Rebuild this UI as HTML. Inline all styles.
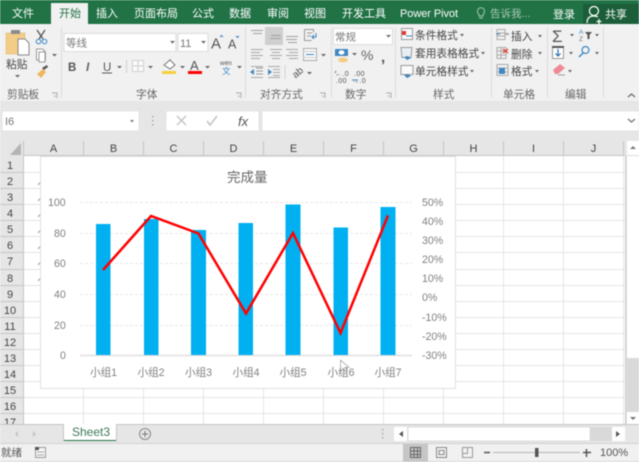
<!DOCTYPE html>
<html><head><meta charset="utf-8"><style>
html,body{margin:0;padding:0;width:639px;height:462px;overflow:hidden;background:#fff}
svg{display:block;filter:blur(.4px)}
text{font-family:"Liberation Sans","Noto Sans CJK SC",sans-serif}
.t{fill:#fff;font-size:11px}
.r{fill:#444;font-size:10.700px}
.g{fill:#666;font-size:10.700px}
.h{fill:#444;font-size:11px;text-anchor:middle}
.c{fill:#808080;font-size:10.600px}
.ln{stroke:#8c8c8c;stroke-width:1;fill:none}
.ar{fill:#666}
</style></head><body>
<svg width="639" height="462" viewBox="0 0 639 462" xmlns="http://www.w3.org/2000/svg">
<!-- title -->
<rect width="639" height="24" fill="#217346"/>
<rect x="583" y="4" width="56" height="20" fill="#1b5e39"/>
<rect x="51" y="3" width="37" height="22" fill="#f1f1f1"/>
<text class="t" x="12" y="17">文件</text>
<text x="59" y="17" font-size="11" fill="#217346">开始</text>
<text class="t" x="96" y="17">插入</text>
<text class="t" x="134" y="17">页面布局</text>
<text class="t" x="192" y="17">公式</text>
<text class="t" x="229" y="17">数据</text>
<text class="t" x="267" y="17">审阅</text>
<text class="t" x="304" y="17">视图</text>
<text class="t" x="342" y="17">开发工具</text>
<text class="t" x="400" y="17" font-size="11.500" textLength="58">Power Pivot</text>
<path d="M479 18h4M478 13a3.500 3.500 0 1 1 6 0c-1 1-1 2-1 3h-4c0-1 0-2-1-3z" fill="none" stroke="#a9c9b6"/>
<text x="490" y="17" font-size="10.500" fill="#a9c9b6">告诉我...</text>
<text class="t" x="553" y="18">登录</text>
<path d="M594 15.500a4.500 4.500 0 1 0-.1 0zM587 23c0-5 3-7 7-7 2 0 3 .5 4 1M599 19v5M596.500 21.500h5" fill="none" stroke="#fff" stroke-width="1.200"/>
<text class="t" x="605" y="18">共享</text>

<!-- ribbon -->
<rect y="24" width="639" height="77" fill="#f1f1f1"/>
<rect y="101" width="639" height="40" fill="#e6e6e6"/>
<path d="M61.500 27v71M245.500 27v71M331.500 27v71M395.500 27v71M491.500 27v71M547.500 27v71M603.500 27v71" stroke="#dcdcdc"/>

<!-- clipboard -->
<rect x="6" y="33" width="19" height="21" fill="#f3cd87" stroke="#e0b36b" stroke-width=".5"/>
<rect x="11" y="30" width="9" height="4" fill="#8a8a8a"/>
<path d="M18 39h7l4 4v12H18z" fill="#fff" stroke="#888"/>
<text class="r" x="6" y="68">粘贴</text>
<path d="M15 75h5l-2.500 2.500z" class="ar"/>
<path d="M37 30l6 9M45 30l-6 9" stroke="#555" stroke-width="1.300" fill="none"/>
<circle cx="38.500" cy="41.500" r="2.300" fill="none" stroke="#3f87c0"/><circle cx="44.500" cy="41.500" r="2.300" fill="none" stroke="#3f87c0"/>
<path d="M36.500 49h6l3 3v8h-9z" fill="#fff" stroke="#999"/><path d="M39 52h6v10h-6z" fill="#fff" stroke="#999"/>
<path d="M52 54h5l-2.500 2.500z" class="ar"/>
<path d="M37 74l6-5 3 3-5 6z" fill="#eeb65f"/><path d="M42 68l5-3 1 2-4 3z" fill="#555"/>
<text class="g" x="7" y="98">剪贴板</text>
<path d="M52 93h5v5M54 96h1v1" fill="none" stroke="#999" stroke-width=".8"/>

<!-- font -->
<rect x="64" y="33.500" width="112" height="18" fill="#fff" stroke="#dcdcdc"/>
<rect x="178" y="33.500" width="30" height="18" fill="#fff" stroke="#dcdcdc"/>
<text x="66" y="46.500" font-size="10.500" fill="#777">等线</text>
<text x="180" y="47" font-size="11" fill="#777">11</text>
<path d="M170 41h5l-2.500 2.500zM201 41h5l-2.500 2.500z" class="ar"/>
<text x="211" y="48.500" font-size="15" fill="#555">A</text><path d="M220 37l1.500-1.500L223 37" fill="none" stroke="#3f87c0"/>
<text x="228" y="48.500" font-size="12.500" fill="#555">A</text><path d="M236 36l1.500 1.500L239 36" fill="none" stroke="#3f87c0"/>
<text x="68" y="71" font-size="11.500" font-weight="bold" fill="#555">B</text>
<text x="86" y="71" font-size="12" font-style="italic" font-weight="bold" fill="#666" font-family="Liberation Serif">I</text>
<text x="103" y="71" font-size="11.500" fill="#555">U</text><path d="M102 73h10" stroke="#555"/>
<path d="M117 66h5l-2.500 2.500z" class="ar"/>
<path d="M126.500 60v13" stroke="#d0d0d0"/>
<rect x="132.500" y="60.500" width="11" height="11" fill="#fafafa" stroke="#d0d0d0"/><path d="M138 60v12M132 66h12" stroke="#d0d0d0"/>
<path d="M148 66h5l-2.500 2.500z" class="ar"/>
<path d="M164 65l6-5 5 5-5 4z" fill="#fff" stroke="#777"/><path d="M170 60v-1" stroke="#777"/>
<rect x="162" y="71" width="14" height="3" fill="#f5cf3c"/>
<path d="M180 66h5l-2.500 2.500z" class="ar"/>
<text x="190" y="70" font-size="13" fill="#555">A</text>
<rect x="188" y="71" width="14" height="3" fill="#f00"/>
<path d="M205 66h5l-2.500 2.500z" class="ar"/>
<text x="220" y="65" font-size="6.500" fill="#555">wén</text>
<text x="222" y="74" font-size="8.500" fill="#3f87c0">文</text>
<path d="M237 66h5l-2.500 2.500z" class="ar"/>
<text class="g" x="136" y="98">字体</text>
<path d="M236 93h5v5M238 96h1v1" fill="none" stroke="#999" stroke-width=".8"/>

<!-- align -->
<rect x="265" y="27" width="18" height="18" fill="#cfcfcf"/>
<path d="M251 30.500h12M253 33.500h9M271 35.500h10M270 38.500h11M286 36.500h12M286 39.500h11M288 42.500h9" stroke="#a0a0a0"/>
<path d="M251 49.500h12M251 52.500h9M251 55.500h12M251 58.500h9M270 49.500h12M272 52.500h8M270 55.500h12M272 58.500h8M286 49.500h12M289 52.500h9M286 55.500h12M289 58.500h9" stroke="#a8a8a8"/>
<path d="M304.500 29.500h9v3M304.500 29.500v11h7M307 33h5M307 36h4" stroke="#999" fill="none"/><path d="M316 33v4h-4m2-2l-2 2 2 2" stroke="#3f87c0" fill="none"/>
<rect x="303.500" y="48.500" width="13" height="12" fill="#fafafa" stroke="#aaa"/><path d="M306 54.500h8" stroke="#3f87c0"/><path d="M303 51.500h14M303 57.500h14" stroke="#ccc"/>
<path d="M321 54h5l-2.500 2.500z" class="ar"/>
<path d="M256 68h7M256 71h7M256 74h7" stroke="#999" fill="none"/><path d="M250 72l4-3v6z" fill="#3f87c0"/><path d="M251 66.500h12M251 77.500h12" stroke="#aaa"/>
<path d="M268 66.500h12M273 69.500h7M273 72.500h7M273 75.500h7M268 77.500h12" stroke="#aaa"/><path d="M272 72l-4-3v6z" fill="#3f87c0"/>
<path d="M285 65v14" stroke="#d5d5d5"/>
<text x="292" y="77" font-size="10" fill="#555" transform="rotate(-40 296 73)">ab</text>
<path d="M307 72h5l-2.500 2.500z" class="ar"/>
<text class="g" x="260" y="98">对齐方式</text>
<path d="M320 93h5v5M322 96h1v1" fill="none" stroke="#999" stroke-width=".8"/>

<!-- number -->
<rect x="333.500" y="28.500" width="59" height="16" fill="#fff" stroke="#dcdcdc"/>
<text x="335" y="40.500" font-size="10.500" fill="#777">常规</text>
<path d="M386 35h5l-2.500 2.500z" class="ar"/>
<rect x="335" y="49" width="13" height="7" fill="#3f87c0"/><ellipse cx="341.500" cy="52.500" rx="3" ry="2.200" fill="#fff"/>
<ellipse cx="343" cy="60" rx="5" ry="2.500" fill="#f3cd87"/>
<path d="M352 53h5l-2.500 2.500z" class="ar"/>
<text x="361" y="60" font-size="14" fill="#666">%</text>
<text x="381" y="62" font-size="15" font-weight="bold" fill="#555" font-family="Liberation Serif">,</text>
<text x="335" y="76" font-size="7" fill="#555" letter-spacing=".4">←.0</text>
<text x="336" y="83" font-size="7" fill="#555" letter-spacing=".4">.00</text>
<text x="354" y="76" font-size="7" fill="#555" letter-spacing=".4">.00</text>
<text x="352" y="83" font-size="7" fill="#555" letter-spacing=".4">→.0</text>
<path d="M336 71l-1 2M352 80h6" stroke="#3f87c0"/>
<text class="g" x="345" y="98">数字</text>
<path d="M386 93h5v5M388 96h1v1" fill="none" stroke="#999" stroke-width=".8"/>

<!-- styles -->
<rect x="401.500" y="28.500" width="11" height="11" fill="#fafafa" stroke="#999"/><path d="M402 31h4v4h-4z" fill="#e03a30"/><path d="M406 36h6" stroke="#3f87c0"/>
<path d="M401 47.500h11l-1 10h-9z" fill="#e8eef3" stroke="#999"/><path d="M404 57l3 3 4-2-3-2z" fill="#3f87c0"/>
<path d="M401 65.500h12v9h-12z" fill="#fafafa" stroke="#999"/><path d="M404 75l3 3 4-2-3-2z" fill="#3f87c0"/>
<text class="r" x="415" y="39">条件格式</text><path d="M460 34h4l-2 2.500z" class="ar"/>
<text class="r" x="415" y="57">套用表格格式</text><path d="M481 52h4l-2 2.500z" class="ar"/>
<text class="r" x="415" y="75">单元格样式</text><path d="M470 70h4l-2 2.500z" class="ar"/>
<text class="g" x="433" y="98">样式</text>

<!-- cells -->
<path d="M497 29.500h8v10h-8zM497 33h8M497 36h8" stroke="#aaa" fill="none"/><path d="M496 34h4" stroke="#3f87c0"/><rect x="505" y="33" width="4" height="2" fill="#aaa"/>
<path d="M497 47.500h9v11h-9zM497 51h9M497 55h9M501 47v11" stroke="#aaa" fill="none"/><path d="M503 49l5 4M508 49l-5 4" stroke="#e03a30" stroke-width="1.200"/>
<path d="M497 64.500h11v11h-11zM497 68h11M497 72h11" stroke="#aaa" fill="none"/><rect x="499" y="68" width="6" height="6" fill="#3f87c0"/>
<text class="r" x="511" y="40">插入</text><path d="M538 35h4l-2 2.500z" class="ar"/>
<text class="r" x="511" y="58">删除</text><path d="M538 52h4l-2 2.500z" class="ar"/>
<text class="r" x="511" y="75">格式</text><path d="M535 70h4l-2 2.500z" class="ar"/>
<text class="g" x="503" y="98">单元格</text>

<!-- edit -->
<text x="552" y="42" font-size="17" fill="#555">Σ</text>
<path d="M570 34h4l-2 2.500z" class="ar"/>
<text x="579" y="34" font-size="6.500" fill="#3f87c0">A</text><text x="579" y="41" font-size="6.500" fill="#777">Z</text>
<path d="M585 32h7l-2.500 3v4h-2v-4z" fill="#555"/>
<path d="M595 34h4l-2 2.500z" class="ar"/>
<rect x="552.500" y="46.500" width="11" height="12" fill="#fff" stroke="#999"/><rect x="552" y="46" width="12" height="2" fill="#555"/>
<path d="M558 49v7m-2.500-2.500L558 56l2.500-2.500" stroke="#2a6fb0" stroke-width="1.200" fill="none"/>
<path d="M569 52h4l-2 2.500z" class="ar"/>
<circle cx="585.500" cy="50" r="3.500" fill="none" stroke="#3f87c0" stroke-width="1.200"/><path d="M583 53l-4 4" stroke="#3f87c0" stroke-width="1.500"/>
<path d="M595 52h4l-2 2.500z" class="ar"/>
<path d="M553 70l7-6 5 4-7 6h-3z" fill="#ee8a92"/>
<path d="M558 75h7" stroke="#999"/>
<path d="M568 70h4l-2 2.500z" class="ar"/>
<text class="g" x="565" y="98">编辑</text>
<path d="M628 97l3.500-3 3.500 3" fill="none" stroke="#666" stroke-width="1.200"/>

<!-- formula bar -->
<rect x="2" y="111" width="137" height="20" fill="#fff" stroke="#dcdcdc" stroke-width=".6"/>
<text x="5" y="125" font-size="11" fill="#777">I6</text>
<path d="M130 120h4l-2 2.500z" fill="#777"/>
<path d="M152 116h1.500v1.500H152zM152 120h1.500v1.500H152zM152 124h1.500v1.500H152z" fill="#aaa"/>
<rect x="166" y="111" width="93" height="20" fill="#fff" stroke="#dcdcdc" stroke-width=".6"/>
<rect x="262" y="111" width="377" height="20" fill="#fff" stroke="#dcdcdc" stroke-width=".6"/>
<path d="M177 116l9 9M186 116l-9 9" stroke="#c2c2c2" stroke-width="1.300"/>
<path d="M207 121l3 4 7-9" stroke="#c2c2c2" stroke-width="1.500" fill="none"/>
<text x="238" y="126" font-size="13" font-style="italic" fill="#555" font-family="Liberation Serif">fx</text>
<path d="M628 119l3.500 3 3.500-3" fill="none" stroke="#777" stroke-width="1.300"/>

<!-- headers -->
<rect y="141" width="626" height="15" fill="#e6e6e6"/>
<rect y="141" width="24" height="283" fill="#e6e6e6"/>
<path d="M21 143v12H10z" fill="#b4b4b4"/>
<path d="M24 155.500h602" stroke="#c6c6c6"/><path d="M23.500 141v283" stroke="#c6c6c6"/>
<path d="M83.500 141v15M143.500 141v15M203.500 141v15M263.500 141v15M323.500 141v15M383.500 141v15M443.500 141v15M503.500 141v15M563.500 141v15M623.500 141v15" stroke="#c6c6c6"/>
<text class="h" x="53.500" y="152">A</text><text class="h" x="113.500" y="152">B</text><text class="h" x="173.500" y="152">C</text><text class="h" x="233.500" y="152">D</text><text class="h" x="293.500" y="152">E</text><text class="h" x="353.500" y="152">F</text><text class="h" x="413.500" y="152">G</text><text class="h" x="473.500" y="152">H</text><text class="h" x="533.500" y="152">I</text><text class="h" x="593.500" y="152">J</text>
<g>
<path d="M0 172.500h24M0 188.500h24M0 204.500h24M0 220.500h24M0 236.500h24M0 252.500h24M0 269.500h24M0 285.500h24M0 301.500h24M0 317.500h24M0 333.500h24M0 349.500h24M0 365.500h24M0 381.500h24M0 397.500h24M0 413.500h24" stroke="#c6c6c6"/>
<text class="h" x="10" y="169">1</text><text class="h" x="10" y="185">2</text><text class="h" x="10" y="201">3</text><text class="h" x="10" y="217">4</text><text class="h" x="10" y="233">5</text><text class="h" x="10" y="249">6</text><text class="h" x="10" y="265">7</text><text class="h" x="10" y="282">8</text><text class="h" x="10" y="298">9</text><text class="h" x="10" y="314">10</text><text class="h" x="10" y="330">11</text><text class="h" x="10" y="346">12</text><text class="h" x="10" y="362">13</text><text class="h" x="10" y="378">14</text><text class="h" x="10" y="394">15</text><text class="h" x="10" y="410">16</text><text class="h" x="10" y="426">17</text>
</g>

<!-- grid -->
<path d="M24 172.500h602M24 188.500h602M24 204.500h602M24 220.500h602M24 236.500h602M24 252.500h602M24 269.500h602M24 285.500h602M24 301.500h602M24 317.500h602M24 333.500h602M24 349.500h602M24 365.500h602M24 381.500h602M24 397.500h602M24 413.500h602" stroke="#e6e6e6"/>
<path d="M83.500 156v268M143.500 156v268M203.500 156v268M263.500 156v268M323.500 156v268M383.500 156v268M443.500 156v268M503.500 156v268M563.500 156v268M623.500 156v268" stroke="#e6e6e6"/>
<path d="M38 185l1.500-2 1 2M38 201l1.500-2 1 2M38 217l1.500-2 1 2M38 233l1.500-2 1 2M38 249l1.500-2 1 2M38 265l1.500-2 1 2M38 281l1.500-2 1 2" stroke="#b0907a" fill="none" stroke-width=".8"/>

<!-- chart -->
<rect x="40.500" y="156.500" width="415" height="232" fill="#fff" stroke="#e0e0e0"/>
<text x="227" y="182" font-size="13.500" fill="#666">完成量</text>
<path d="M80 202.500h332M80 233.500h332M80 263.500h332M80 294.500h332M80 325.500h332" stroke="#e8e8e8" stroke-dasharray="3 2"/>
<path d="M80 355.500h332" stroke="#e0e0e0" stroke-width="1.500"/>
<g fill="#00b0f0">
<rect x="96" y="224" width="14.500" height="131"/>
<rect x="144" y="219" width="14.500" height="136"/>
<rect x="191" y="230" width="15" height="125"/>
<rect x="238.500" y="223" width="14.500" height="132"/>
<rect x="285.500" y="204.500" width="15" height="150.500"/>
<rect x="333.500" y="227.500" width="14.500" height="127.500"/>
<rect x="380.500" y="207" width="15" height="148"/>
</g>
<path d="M103 270L151 216 198.500 233.500 246 313.500 293 233 340.500 333 388 215.500" fill="none" stroke="#f00" stroke-width="2.500" stroke-linejoin="miter"/>
<g>
<text x="48" y="206" class="c">100</text><text x="54" y="237" class="c">80</text><text x="54" y="267" class="c">60</text><text x="54" y="298" class="c">40</text><text x="54" y="329" class="c">20</text><text x="60" y="359" class="c">0</text>
<text x="422" y="206" class="c">50%</text><text x="422" y="225" class="c">40%</text><text x="422" y="244" class="c">30%</text><text x="422" y="263" class="c">20%</text><text x="422" y="282" class="c">10%</text><text x="422" y="301" class="c">0%</text><text x="422" y="321" class="c">-10%</text><text x="422" y="340" class="c">-20%</text><text x="422" y="359" class="c">-30%</text>
<text x="90" y="376" class="c">小组1</text><text x="137.500" y="376" class="c">小组2</text><text x="185" y="376" class="c">小组3</text><text x="232.500" y="376" class="c">小组4</text><text x="279.500" y="376" class="c">小组5</text><text x="327.500" y="376" class="c">小组6</text><text x="374.500" y="376" class="c">小组7</text>
</g>
<path d="M340.500 360v11l3-2.500 2 3.500 1.500-1-2-3.500 4 0z" fill="#fff" fill-opacity=".7" stroke="#888" stroke-width=".6"/>

<!-- vertical scrollbar -->
<rect x="625" y="141" width="14" height="283" fill="#e6e6e6"/>
<rect x="625" y="156" width="1.500" height="268" fill="#d0d0d0"/>
<rect x="627" y="141" width="12" height="217" fill="#fff"/>
<rect x="627" y="358" width="12" height="54" fill="#d9d9d9"/>
<rect x="627" y="412" width="12" height="12" fill="#fff"/>
<path d="M627 155.500h12" stroke="#ddd"/>
<path d="M630 149l3-3 3 3zM630 417l3 3 3-3z" fill="#777"/>

<!-- sheet tabs -->
<rect y="424" width="639" height="20" fill="#e6e6e6"/>
<path d="M0 424.500h639" stroke="#c6c6c6"/>
<rect x="64" y="424" width="52" height="17" fill="#fff"/>
<path d="M64 440.500h52" stroke="#217346"/>
<path d="M63.500 424v17M116.500 424v17" stroke="#c6c6c6"/>
<text x="72" y="436" font-size="12" fill="#3d7a58">Sheet3</text>
<circle cx="145" cy="434" r="5.500" fill="none" stroke="#8a8a8a"/><path d="M142 434h6M145 431v6" stroke="#777"/>
<path d="M18 431l-3 3 3 3zM33 431l3 3-3 3z" fill="#c4c4c4"/>
<path d="M382 429h1.500v1.500H382zM382 433h1.500v1.500H382zM382 437h1.500v1.500H382z" fill="#aaa"/>
<rect x="394" y="427" width="13" height="14" fill="#fff"/>
<rect x="408" y="427" width="182" height="14" fill="#fff" stroke="#cfcfcf" stroke-width=".6"/>
<rect x="590" y="427" width="22" height="14" fill="#d9d9d9"/>
<rect x="612" y="427" width="13" height="14" fill="#fff"/>
<path d="M403 431l-4 3 4 3zM616 431l4 3-4 3z" fill="#555"/>

<!-- status -->
<rect y="444" width="639" height="18" fill="#f1f1f1"/>
<path d="M0 443.500h639" stroke="#d0d0d0"/>
<path d="M0 461.500h639" stroke="#d8d8d8"/>
<text x="1" y="456" font-size="10.500" fill="#555">就绪</text>
<rect x="35.500" y="447.500" width="10" height="10" fill="#f5f5f5" stroke="#999"/><rect x="35" y="447" width="4" height="3" fill="#555"/><path d="M37 452h7M37 455h7" stroke="#aaa"/>
<rect x="403" y="444" width="25" height="18" fill="#c6c6c6"/>
<path d="M410.500 447.500h10v10h-10zM410.500 451h10M410.500 454.500h10M414 447.500v10M417.500 447.500v10" stroke="#666" fill="none"/>
<path d="M436.500 447.500h10v10h-10zM439 450.500h5v4h-5z" stroke="#888" fill="none"/>
<path d="M462.500 447.500h10v10h-10zM467.500 447.500v6h-5" stroke="#999" fill="none"/>
<path d="M484 452.500h6" stroke="#555" stroke-width="1.500"/>
<path d="M493 452.500h87" stroke="#b5b5b5"/>
<rect x="535" y="448" width="3.500" height="9" fill="#555"/>
<path d="M583 452.500h8M586.500 449v8" stroke="#555" stroke-width="1.500"/>
<text x="600" y="456" font-size="11" fill="#555">100%</text>
</svg>
</body></html>
